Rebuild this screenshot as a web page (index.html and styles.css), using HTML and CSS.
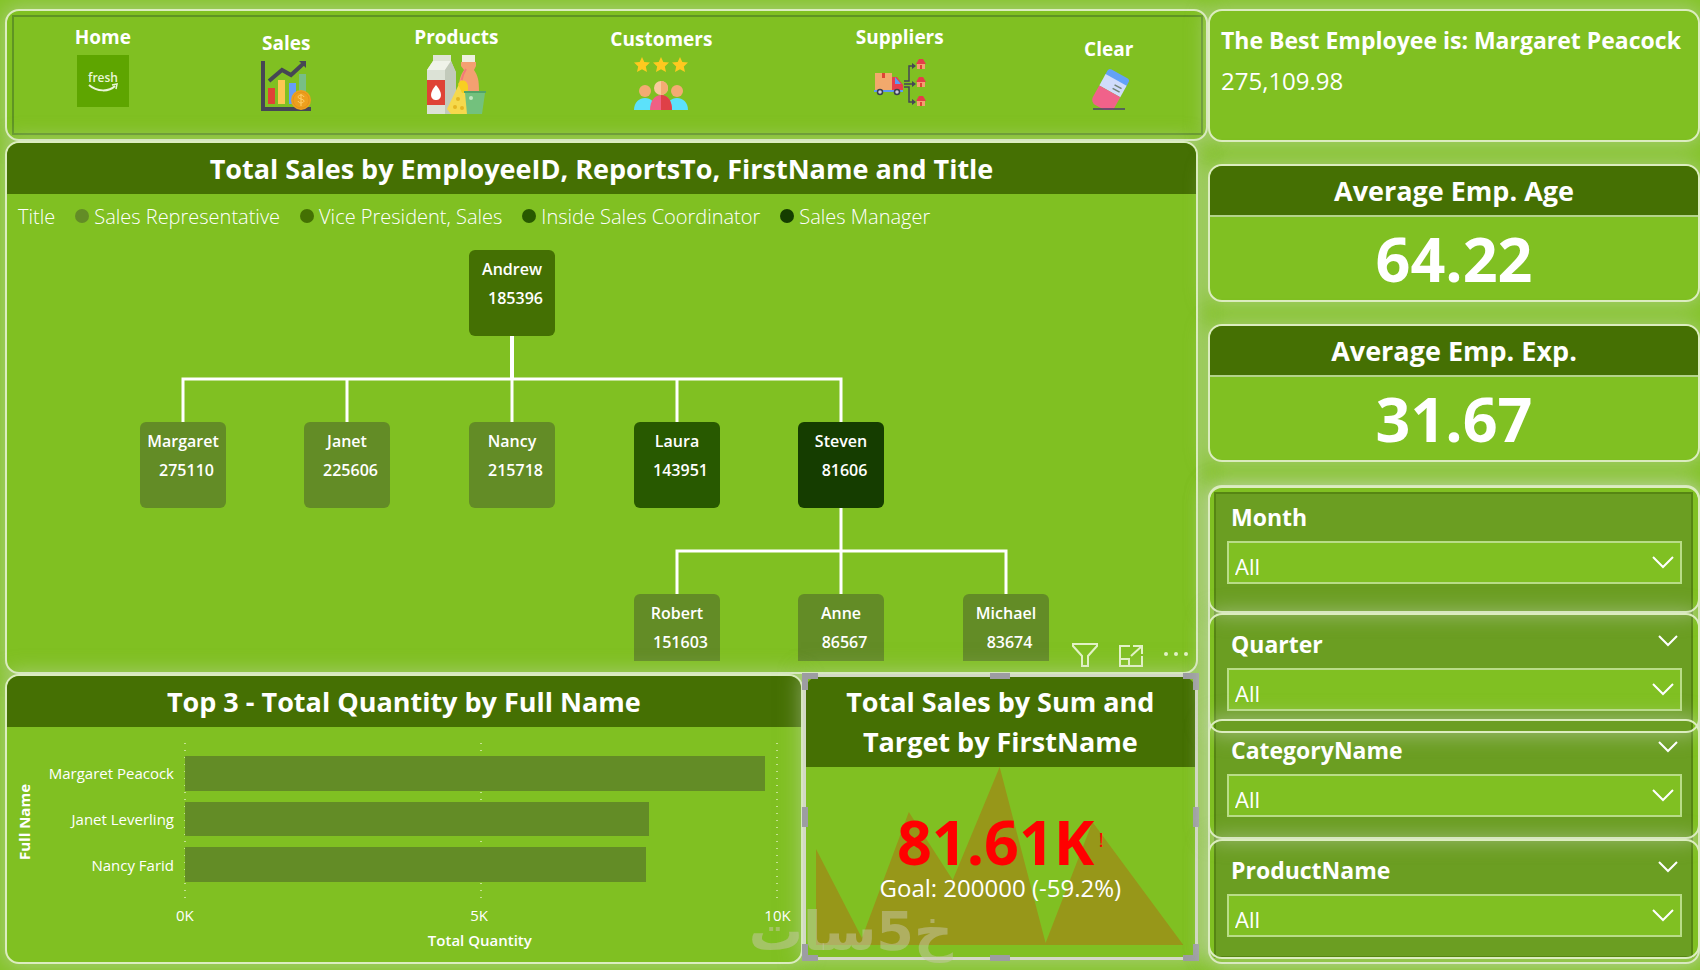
FILE: index.html
```html
<!DOCTYPE html>
<html lang="en">
<head>
<meta charset="utf-8">
<title>Employee Sales Dashboard</title>
<link rel="stylesheet" href="styles.css">
</head>
<body>
<div class="page">
  <div class="left">
    <header class="card nav-card">
      <nav class="nav">
        <a class="nav-item" href="#home">Home
          <svg width="52" height="52" viewBox="0 0 52 52"><rect width="52" height="52" fill="#5ea500"/><text x="26" y="27" text-anchor="middle" class="fresh">fresh</text><path d="M12 30c8 7 20 7 26 1" fill="none" stroke="#eaf6d8" stroke-width="2"/><path d="M35 30l5-1-1 5" fill="none" stroke="#eaf6d8" stroke-width="1.5"/></svg>
        </a>
        <a class="nav-item low" href="#sales">Sales
          <svg width="50" height="50" viewBox="0 0 50 50"><path d="M2 0v48h48" fill="none" stroke="#464655" stroke-width="4"/><path d="M8 20L21 9l9 5L42 3" fill="none" stroke="#464655" stroke-width="4"/><path d="M38 0h7v7z" fill="#464655"/><rect x="7" y="27" width="7" height="16" fill="#df4336"/><rect x="17" y="19" width="7" height="24" fill="#fdc752"/><rect x="28" y="22" width="7" height="21" fill="#669df6"/><rect x="38" y="13" width="7" height="30" fill="#78be86"/><circle cx="40" cy="39" r="10" fill="#eda01d"/><circle cx="40" cy="39" r="8" fill="none" stroke="#e5921c"/><path d="M43 36c-1-3-6-2-6 0s6 2 6 4-5 3-6 0M40 33v12" fill="none" stroke="#ffd06b"/></svg>
        </a>
        <a class="nav-item" href="#products">Products
          <svg width="60" height="60" viewBox="0 0 60 60"><path d="M7 0h18v6H7z" fill="#dfe5d5"/><path d="M7 6h18l5 12v41H1V15z" fill="#dce2d6"/><path d="M7 6h18l-6 9H1z" fill="#eff3e9"/><path d="M25 6l5 11v32l-4 10h-7V15z" fill="#c2cabb"/><rect x="1" y="25" width="18" height="25" fill="#df4336"/><path d="M10 30c8 9 5 15 0 15s-8-6 0-15z" fill="#fff"/><rect x="36" y="0" width="13" height="7" fill="#edf0df"/><path d="M35 7h15v4l-2 4c4 6 5 10 5 21H33c0-11 1-15 5-21l-3-4z" fill="#f4a071"/><path d="M40 14c-5 8-5 14-5 22" fill="none" stroke="#f47a78" stroke-width="2"/><path d="M21 54L35 25l6 6v28H25z" fill="#f6d94c"/><path d="M32 29c3-6 10-4 10 3v6h-6z" fill="#f8cf21"/><circle cx="32" cy="44" r="2" fill="#e5b622"/><circle cx="36" cy="53" r="2" fill="#e5b622"/><circle cx="29" cy="52" r="2" fill="#e5b622"/><path d="M39 38h20l-3 21H41z" fill="#73c17d"/><path d="M38 37h22" stroke="#52a467" stroke-width="2"/><circle cx="45" cy="43" r="2" fill="#c3e8c2"/></svg>
        </a>
        <a class="nav-item mid" href="#customers">Customers
          <svg width="54" height="54" viewBox="0 0 54 54"><defs><path id="star" d="M8 0l2.300 5 5.700.6-4.200 3.800 1.200 5.600-5-2.800L3 15l1.200-5.600L0 5.600 5.700 5z" fill="#ffc91f"/></defs><use href="#star"/><use href="#star" x="19"/><use href="#star" x="38"/><circle cx="11" cy="34" r="6" fill="#f3ab73"/><circle cx="43" cy="34" r="6" fill="#f3ab73"/><path d="M0 53c0-16 22-16 22 0z" fill="#5ce1fa"/><path d="M32 53c0-16 22-16 22 0z" fill="#5ce1fa"/><circle cx="27" cy="31" r="7" fill="#f8ca9c"/><path d="M27 24a7 7 0 0 1 0 14z" fill="#f3ab73"/><path d="M16 53c0-20 22-20 22 0z" fill="#f06084"/><path d="M27 38c8 0 11 7 11 15H27z" fill="#df4047"/></svg>
        </a>
        <a class="nav-item" href="#suppliers">Suppliers
          <svg class="drop" width="52" height="48" viewBox="0 0 52 48"><rect x="1" y="14" width="17" height="17" fill="#f2a96c"/><path d="M8 14h3v5H8z" fill="#df4336"/><path d="M18 18h5l6 8v6H18z" fill="#e63d4d"/><path d="M21 18l6 7h-6z" fill="#5d9af5"/><path d="M0 32h29" stroke="#5d9af5" stroke-width="2"/><circle cx="6" cy="33" r="2.500" fill="#ccd" stroke="#39404e" stroke-width="1.500"/><circle cx="23" cy="33" r="2.500" fill="#ccd" stroke="#39404e" stroke-width="1.500"/><path d="M30 22h5V7h4M30 25h9M30 28h5v15h4" fill="none" stroke="#464655" stroke-width="1.500"/><path d="M38 4l4 3-4 3zM38 22l4 3-4 3zM38 40l4 3-4 3z" fill="#464655"/><defs><g id="house"><path d="M1 4h8v6H1z" fill="#f4a071"/><path d="M0 5l3-5h4l3 5z" fill="#e43e49"/><path d="M4 6h2v4H4z" fill="#df4336"/></g></defs><use href="#house" x="42" y="0"/><use href="#house" x="42" y="18"/><use href="#house" x="42" y="37"/></svg>
        </a>
        <a class="nav-item lowest" href="#clear">Clear
          <svg width="42" height="43" viewBox="0 0 42 43"><g transform="translate(21 1) rotate(29)"><path d="M3 0h18a3 3 0 0 1 3 3v6H0V3a3 3 0 0 1 3-3z" fill="#63a2f7"/><path d="M0 7h24v13H0z" fill="#d0dcfb"/><path d="M0 20h24v13a6 6 0 0 1-6 6H6a6 6 0 0 1-6-6z" fill="#f0628a"/><path d="M13 12h8M13 16h8" stroke="#738476" stroke-width="1.500"/></g><path d="M5 42h32" stroke="#464668" stroke-width="1.500"/></svg>
        </a>
      </nav>
    </header>

    <main class="visuals">
      <section class="card org">
        <h2 class="title">Total Sales by EmployeeID, ReportsTo, FirstName and Title</h2>
        <ul class="legend">
          <li>Title</li>
          <li><i class="dot rep"></i>Sales Representative</li>
          <li><i class="dot vp"></i>Vice President, Sales</li>
          <li><i class="dot inside"></i>Inside Sales Coordinator</li>
          <li><i class="dot manager"></i>Sales Manager</li>
        </ul>
        <div class="canvas">
          <svg class="links" width="1100" height="421" viewBox="0 0 1100 421"><path d="M505 96v43" stroke-width="4"/><path d="M176 182v-43h658v43M340 139v43M505 139v43M670 139v43M834 268v86M670 354v-43h329v43"/></svg>
          <div class="node vp" style="left:462px;top:10px"><b>Andrew</b><b class="num">185396</b></div>
          <div class="node rep" style="left:133px;top:182px"><b>Margaret</b><b class="num">275110</b></div>
          <div class="node rep" style="left:297px;top:182px"><b>Janet</b><b class="num">225606</b></div>
          <div class="node rep" style="left:462px;top:182px"><b>Nancy</b><b class="num">215718</b></div>
          <div class="node inside" style="left:627px;top:182px"><b>Laura</b><b class="num">143951</b></div>
          <div class="node manager" style="left:791px;top:182px"><b>Steven</b><b class="num">81606</b></div>
          <div class="node rep" style="left:627px;top:354px"><b>Robert</b><b class="num">151603</b></div>
          <div class="node rep" style="left:791px;top:354px"><b>Anne</b><b class="num">86567</b></div>
          <div class="node rep" style="left:956px;top:354px"><b>Michael</b><b class="num">83674</b></div>
        </div>
        <div class="tools">
          <button aria-label="Filters"><svg width="28" height="26" viewBox="0 0 28 26"><path d="M2 2h24v2L17 14v10h-6V14L2 4z"/></svg></button>
          <button aria-label="Focus mode"><svg width="26" height="26" viewBox="0 0 26 26"><path d="M12 4H2v20h22V14M2 17h9v7M15 4h9v8M24 4L13 14"/></svg></button>
          <button aria-label="More options"><svg class="solid" width="26" height="26" viewBox="0 0 26 26"><circle cx="3" cy="12" r="2"/><circle cx="13" cy="12" r="2"/><circle cx="23" cy="12" r="2"/></svg></button>
        </div>
      </section>

      <div class="bottom">
        <section class="card top3">
          <h2 class="title">Top 3 - Total Quantity by Full Name</h2>
          <div class="chart">
            <span class="y-title">Full Name</span>
            <ul class="names"><li>Margaret Peacock</li><li>Janet Leverling</li><li>Nancy Farid</li></ul>
            <div class="plot">
              <div class="bar" style="width:98%"></div>
              <div class="bar" style="width:78.500%"></div>
              <div class="bar" style="width:78%"></div>
            </div>
            <div class="ticks"><span>0K</span><span>5K</span><span>10K</span></div>
            <span class="x-title">Total Quantity</span>
          </div>
        </section>

        <section class="kpi">
          <h2 class="title tall">Total Sales by Sum and Target by FirstName</h2>
          <div class="kpi-body">
            <svg class="trend" viewBox="0 0 368 178" preserveAspectRatio="none"><path d="M0 178V82l46 89L93 45l44 68L184 0l46 176 47-121 91 123z"/></svg>
            <p class="kpi-value">81.61K<span>!</span></p>
            <p class="kpi-goal">Goal: 200000 (-59.2%)</p>
          </div>
          <i class="grip tl"></i><i class="grip tr"></i><i class="grip bl"></i><i class="grip br"></i>
          <i class="grip t"></i><i class="grip b"></i><i class="grip l"></i><i class="grip r"></i>
          <span class="watermark" lang="ar" dir="rtl">خ5سات</span>
        </section>
      </div>
    </main>
  </div>

  <aside class="right">
    <section class="card best">
      <h2>The Best Employee is: Margaret Peacock</h2>
      <p>275,109.98</p>
    </section>
    <section class="card metric">
      <h2 class="title">Average Emp. Age</h2>
      <p>64.22</p>
    </section>
    <section class="card metric">
      <h2 class="title">Average Emp. Exp.</h2>
      <p>31.67</p>
    </section>
    <form class="card slicers">
      <div class="slicer">
        <label for="month">Month</label>
        <div class="field"><select id="month"><option>All</option></select><svg width="22" height="13" viewBox="0 0 22 13"><path d="M1 1l10 10L21 1"/></svg></div>
      </div>
      <div class="slicer">
        <label for="quarter">Quarter</label>
        <button type="button" aria-label="Quarter options"><svg width="20" height="12" viewBox="0 0 20 12"><path d="M1 1l9 9 9-9"/></svg></button>
        <div class="field"><select id="quarter"><option>All</option></select><svg width="22" height="13" viewBox="0 0 22 13"><path d="M1 1l10 10L21 1"/></svg></div>
      </div>
      <div class="slicer overlap">
        <label for="category">CategoryName</label>
        <button type="button" aria-label="CategoryName options"><svg width="20" height="12" viewBox="0 0 20 12"><path d="M1 1l9 9 9-9"/></svg></button>
        <div class="field"><select id="category"><option>All</option></select><svg width="22" height="13" viewBox="0 0 22 13"><path d="M1 1l10 10L21 1"/></svg></div>
      </div>
      <div class="slicer">
        <label for="product">ProductName</label>
        <button type="button" aria-label="ProductName options"><svg width="20" height="12" viewBox="0 0 20 12"><path d="M1 1l9 9 9-9"/></svg></button>
        <div class="field"><select id="product"><option>All</option></select><svg width="22" height="13" viewBox="0 0 22 13"><path d="M1 1l10 10L21 1"/></svg></div>
      </div>
    </form>
  </aside>
</div>
</body>
</html>
```

FILE: styles.css
```css
:root {
  --green: #80c022;
  --dark: #457003;
  --line: #dcedc0;
  --glow: 0 0 20px 2px rgba(205, 218, 195, 0.5);
}
* { box-sizing: border-box; }
body {
  margin: 0;
  background: #84c429;
  color: #fff;
  font-family: "Open Sans", "Noto Sans", sans-serif;
}
h2, p, ul { margin: 0; padding: 0; }
ul { list-style: none; }
button { padding: 0; border: 0; background: none; color: inherit; }

.page {
  display: grid;
  grid-template-columns: minmax(0, 1fr) 492px;
  min-height: 100vh;
  padding: 9px 0 6px 5px;
  overflow: hidden;
}
.left { display: flex; flex-direction: column; }
.card {
  position: relative;
  border: 2px solid var(--line);
  border-radius: 14px;
  background: var(--green);
  box-shadow: var(--glow);
}
.title {
  display: flex;
  align-items: center;
  justify-content: center;
  height: 51px;
  border-radius: 12px 12px 0 0;
  background: var(--dark);
  font-size: 27px;
  font-weight: 700;
  line-height: 40px;
  text-align: center;
}

.nav-card { height: 132px; padding: 4px 3px 4px 5px; }
.nav {
  display: grid;
  grid-template-columns: 178fr 190fr 151fr 260fr 218fr 193fr;
  height: 100%;
  border: 2px solid #5f9423;
}
.nav-item {
  display: flex;
  flex-direction: column;
  align-items: center;
  gap: 4px;
  padding-top: 6px;
  color: #fff;
  font-size: 19px;
  font-weight: 700;
  line-height: 28px;
  text-decoration: none;
}
.nav-item.mid { padding-top: 8px; }
.nav-item.low { padding-top: 12px; }
.nav-item.lowest { padding: 18px 0 0 8px; }
.drop { margin-top: 4px; }
.fresh { fill: #eaf6d8; font-size: 12px; font-weight: 600; }

.visuals { display: flex; flex: 1; flex-direction: column; margin-right: 10px; }
.org { display: flex; flex: 1; flex-direction: column; }
.legend {
  display: flex;
  align-items: center;
  gap: 20px;
  height: 46px;
  padding: 0 0 2px 11px;
  font-size: 20px;
  font-weight: 300;
  white-space: nowrap;
}
.legend li { display: flex; align-items: center; gap: 5px; }
.dot { width: 14px; height: 14px; border-radius: 50%; }
.rep { background: #638c26; }
.vp { background: #447003; }
.inside { background: #285900; }
.manager { background: #153d00; }

.canvas { position: relative; height: 421px; overflow: hidden; }
.links { position: absolute; left: 0; top: 0; fill: none; stroke: #fff; stroke-width: 3; }
.node {
  position: absolute;
  width: 86px;
  height: 86px;
  padding-top: 5px;
  border-radius: 6px;
  font-size: 16px;
  line-height: 29px;
  text-align: center;
}
.node b { display: block; font-weight: 600; }
.node .num { padding-left: 7px; }
.tools { position: absolute; right: 7px; bottom: 4px; display: flex; gap: 19px; }
.tools svg { display: block; fill: none; stroke: #e3f3c6; stroke-width: 2; }
.tools .solid { fill: #e3f3c6; stroke: none; }

.bottom { display: grid; grid-template-columns: minmax(0, 797fr) minmax(0, 395fr); height: 290px; }
.chart {
  display: grid;
  grid-template-columns: 34px 134px minmax(0, 1fr);
  grid-template-rows: 164px 24px 28px;
  padding: 13px 24px 0 0;
}
.y-title {
  grid-row: 1;
  align-self: center;
  justify-self: center;
  writing-mode: vertical-rl;
  rotate: 180deg;
  font-size: 15px;
  font-weight: 700;
}
.names, .plot {
  display: flex;
  flex-direction: column;
  gap: 11px;
  padding: 16px 0 22px;
  height: 164px;
}
.names { padding-right: 1px; text-align: right; font-size: 15px; line-height: 35px; white-space: nowrap; }
.plot {
  margin: 0 -3px 0 7px;
  padding-left: 3px;
  padding-right: 3px;
  background:
    radial-gradient(circle, #c5e292 1px, transparent 1px) 0 0 / 6px 7px repeat-y,
    radial-gradient(circle, #c5e292 1px, transparent 1px) 50% 0 / 6px 7px repeat-y,
    radial-gradient(circle, #c5e292 1px, transparent 1px) 100% 0 / 6px 7px repeat-y;
}
.bar { height: 35px; background: #638c26; }
.ticks {
  grid-column: 3;
  display: flex;
  justify-content: space-between;
  margin: 0 -14px 0 1px;
  font-size: 15px;
  line-height: 22px;
}
.x-title { grid-column: 3; justify-self: center; padding-left: 8px; font-size: 15px; font-weight: 600; line-height: 24px; }

.kpi {
  position: relative;
  display: flex;
  flex-direction: column;
  margin-bottom: 4px;
  border: 3px solid #d3d9c5;
  background: var(--green);
  box-shadow: var(--glow);
}
.title.tall { height: 90px; padding: 0 30px; }
.kpi-body { position: relative; flex: 1; text-align: center; }
.trend { position: absolute; left: 10px; right: 10px; top: 0; width: calc(100% - 22px); height: 178px; fill: #979719; }
.kpi-value { position: relative; padding-top: 43px; color: #f00; font-size: 61px; font-weight: 700; line-height: 64px; }
.kpi-value span { margin-left: 4px; font-size: 20px; font-weight: 400; vertical-align: 18px; line-height: 20px; }
.kpi-goal { position: relative; font-size: 24px; line-height: 28px; }
.grip { position: absolute; border: 0 solid #9d9da2; }
.grip.tl, .grip.tr { top: -4px; }
.grip.bl, .grip.br { bottom: -4px; }
.grip.tl, .grip.bl { left: -4px; }
.grip.tr, .grip.br { right: -4px; }
.grip.tl, .grip.tr, .grip.bl, .grip.br { width: 16px; height: 17px; }
.grip.tl { border-width: 6px 0 0 6px; }
.grip.tr { border-width: 6px 6px 0 0; }
.grip.bl { border-width: 0 0 6px 6px; }
.grip.br { border-width: 0 6px 6px 0; }
.grip.t, .grip.b { left: calc(50% - 10px); width: 20px; height: 6px; background: #9d9da2; }
.grip.l, .grip.r { top: calc(50% - 10px); width: 6px; height: 20px; background: #9d9da2; }
.grip.t { top: -4px; }
.grip.b { bottom: -4px; }
.grip.l { left: -4px; }
.grip.r { right: -4px; }
.watermark {
  position: absolute;
  left: -57px;
  bottom: -8px;
  color: rgba(200, 200, 170, 0.5);
  font-family: "DejaVu Sans", sans-serif;
  font-size: 54px;
  font-weight: 700;
  line-height: 66px;
  white-space: nowrap;
}

.right { display: flex; flex-direction: column; gap: 22px; }
.best { height: 133px; padding: 13px 11px; white-space: nowrap; }
.best h2 { font-size: 23px; font-weight: 700; line-height: 32px; }
.best p { padding-top: 9px; font-size: 24px; line-height: 32px; }
.metric { height: 138px; }
.metric .title { height: 51px; border-bottom: 2px solid #b4d38a; }
.metric p { font-size: 61px; font-weight: 700; line-height: 84px; text-align: center; }

.slicers { flex: 1; margin-top: 1px; }
.slicers::before {
  content: "";
  position: absolute;
  inset: 5px 5px 4px 4px;
  border: 2px solid #568513;
  background: #6b9e22;
}
.slicer {
  position: relative;
  display: grid;
  grid-template-columns: 1fr 20px;
  grid-template-rows: 34px 43px;
  row-gap: 7px;
  align-content: start;
  height: 120px;
  margin: 0 -2px;
  padding: 12px 16px 0 17px;
  border: 2px solid var(--line);
  border-radius: 14px;
  box-shadow: var(--glow);
}
.slicer:first-child { height: 127px; margin-top: -1px; }
.slicer.overlap { margin-top: -14px; }
.slicer label { padding-left: 4px; font-size: 23px; font-weight: 700; line-height: 34px; }
.slicer button { align-self: center; margin: 0 4px 6px -4px; }
.slicer svg { display: block; fill: none; stroke: #fff; stroke-width: 2; }
.field { position: relative; grid-column: 1 / -1; }
.field select {
  width: 100%;
  height: 43px;
  padding: 6px 6px 0;
  border: 2px solid #b9dd87;
  border-radius: 0;
  background: var(--green);
  color: #fff;
  font: 22px "Open Sans", "Noto Sans", sans-serif;
  appearance: none;
}
.field svg { position: absolute; right: 8px; top: 15px; pointer-events: none; }
```
